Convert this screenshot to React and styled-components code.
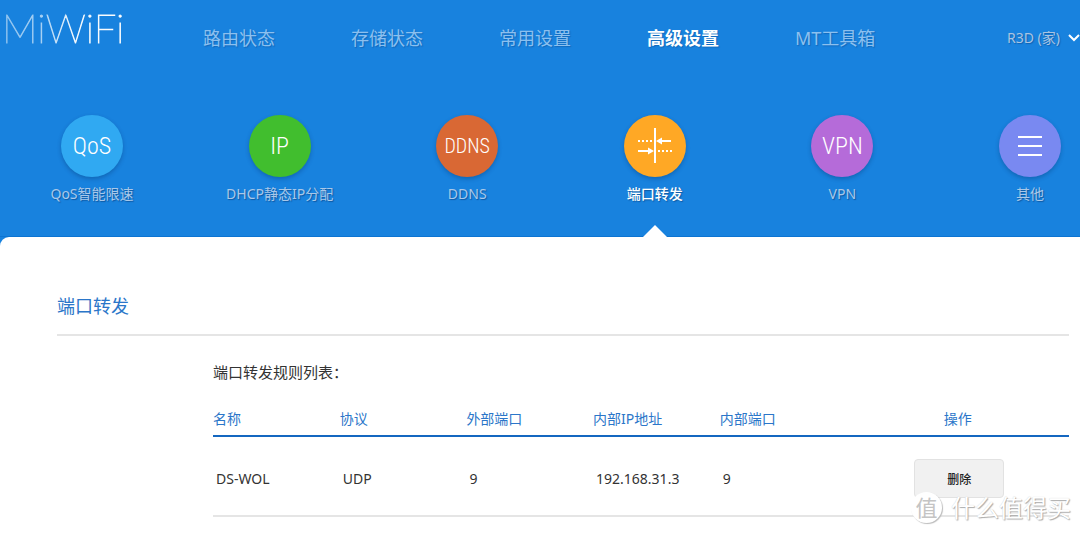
import React from "react";
import styled, { createGlobalStyle } from "styled-components";

const Global = createGlobalStyle`
  *, *::before, *::after { box-sizing: border-box; }
  body {
    margin: 0;
    background: #fff;
    color: #333;
    font: 14px/20px "Noto Sans", "Noto Sans CJK SC", sans-serif;
  }
  a { color: inherit; text-decoration: none; }
`;

const Header = styled.header`
  background: #1882de;
  border-bottom: 1px solid #0c74d2;
`;

const TopBar = styled.div`
  display: flex;
  align-items: flex-start;
  height: 115px;
`;

const Logo = styled.a`
  width: 203px;
  padding: 4px 0 0 2px;

  span {
    font: 100 40px/48px Lato, sans-serif;
    color: transparent;
    background: linear-gradient(90deg, #8cc1ee 0, #a8d1f3 42px, #f2f8fd 72px, #fff 124px) no-repeat;
    -webkit-background-clip: text;
    background-clip: text;
    -webkit-text-stroke: 1px transparent;
  }
`;

const MainNav = styled.nav`
  display: flex;
  gap: 76px;
  padding-top: 24px;
`;

const NavLink = styled.a`
  font-size: 18px;
  line-height: 28px;
  white-space: nowrap;
  font-weight: ${(p) => (p.$active ? 700 : 400)};
  color: ${(p) => (p.$active ? "#fff" : "#8cc0ef")};
  text-shadow: 1px 1px 1px rgba(0, 50, 110, 0.3);
`;

const Device = styled.button`
  display: flex;
  align-items: center;
  gap: 8px;
  margin-left: auto;
  padding: 28px 0 0;
  border: 0;
  background: none;
  color: #a9c4e2;
  font: inherit;
  white-space: nowrap;
  text-shadow: 1px 1px 1px rgba(0, 50, 110, 0.4);
  cursor: pointer;
`;

const Tabs = styled.nav`
  display: flex;
  justify-content: space-between;
  padding: 0 19px 0 61px;
`;

const Tab = styled.a`
  position: relative;
  display: flex;
  flex-direction: column;
  align-items: center;
  gap: 7px;
  width: 62px;
  height: 121px;
  color: ${(p) => (p.$active ? "#fff" : "#a9c8e9")};
  font-weight: ${(p) => (p.$active ? 500 : 400)};
  white-space: nowrap;
  text-shadow: 1px 1px 1px rgba(0, 40, 90, 0.45);

  &::after {
    content: "";
    display: ${(p) => (p.$active ? "block" : "none")};
    position: absolute;
    bottom: -1px;
    left: 19px;
    border: 12px solid transparent;
    border-top: 0;
    border-bottom-color: #fff;
  }
`;

const Disc = styled.span`
  display: flex;
  flex: none;
  align-items: center;
  justify-content: center;
  width: 62px;
  height: 62px;
  border-radius: 50%;
  background: ${(p) => p.$color};
  box-shadow: 0 2px 4px rgba(0, 40, 90, 0.3);
  color: #fff;
  font: 300 ${(p) => (p.$small ? 20 : 24)}px/32px "Roboto Condensed", "Liberation Sans Narrow", Roboto, sans-serif;
  text-shadow: none;
`;

const Panel = styled.main`
  padding: 51px 11px 16px 57px;
  background: #fff;
`;

const PanelEdge = styled.div`
  background: #1882de;

  > * {
    border-top-left-radius: 9px;
  }
`;

const Title = styled.h1`
  margin: 0;
  padding: 4px 0 14px;
  border-bottom: 2px solid #e5e5e5;
  color: #2b76c9;
  font-size: 18px;
  font-weight: 400;
  line-height: 28px;
`;

const Section = styled.section`
  padding: 26px 0 0 156px;
`;

const Rules = styled.table`
  width: 100%;
  table-layout: fixed;
  border-collapse: collapse;

  caption {
    padding-bottom: 27px;
    text-align: left;
    font-size: 15px;
    line-height: 20px;
  }
  th {
    padding: 0 0 6px;
    border-bottom: 2px solid #1467c0;
    color: #2b76c9;
    font-weight: 400;
    text-align: left;
  }
  td {
    height: 80px;
    padding: 5px 0 0 3px;
    border-bottom: 2px solid #e5e5e5;
  }
  th:last-child, td:last-child {
    width: 26%;
    text-align: center;
  }
`;

const DeleteButton = styled.button`
  width: 90px;
  height: 39px;
  border: 1px solid #e2e2e2;
  border-radius: 4px;
  background: #f1f1f1;
  color: #222;
  font: 500 12px/20px "Noto Sans CJK SC", sans-serif;
  cursor: pointer;
`;

const Watermark = styled.div`
  position: absolute;
  top: 490px;
  right: 9px;
  display: flex;
  align-items: center;
  gap: 9px;
  color: #fff;
  font: 400 24px/34px "Noto Sans CJK SC", sans-serif;
  text-shadow: 1px 1px 1px #aaa, 0 0 1px #ccc;
  pointer-events: none;
`;

const Seal = styled.span`
  width: 31px;
  height: 31px;
  border-radius: 50%;
  background: #fff;
  box-shadow: 1px 1px 1px #bbb;
  color: #c4c4c4;
  font-size: 22px;
  line-height: 29px;
  text-align: center;
  text-shadow: none;
`;

const ForwardIcon = () => (
  <svg width="34" height="36" viewBox="0 0 34 36" fill="#fff" aria-hidden="true">
    <path d="M16 0h2v35h-2z" />
    <path d="M0 12h2v2H0zM4 12h2v2H4zM8 12h2v2H8zM12 12h2v2h-2zM20 22h2v2h-2zM24 22h2v2h-2zM28 22h2v2h-2zM32 22h2v2h-2z" />
    <path d="M18 13l6-3.500v2.500h9v2H24v2.500zM16 23l-6 3.500v-2.500H0v-2h10v-2.500z" />
  </svg>
);

const MenuIcon = () => (
  <svg width="24" height="20" viewBox="0 0 24 20" fill="#fff" aria-hidden="true">
    <path d="M0 0h24v2H0zM0 9h24v2H0zM0 18h24v2H0z" />
  </svg>
);

const navItems = ["路由状态", "存储状态", "常用设置", "高级设置", "MT工具箱"];

const tabs = [
  { label: "QoS智能限速", mark: "QoS", color: "#30a9f2" },
  { label: "DHCP静态IP分配", mark: "IP", color: "#41be2e" },
  { label: "DDNS", mark: "DDNS", color: "#d96834", small: true },
  { label: "端口转发", mark: <ForwardIcon />, color: "#ffa825", active: true },
  { label: "VPN", mark: "VPN", color: "#b56bd9" },
  { label: "其他", mark: <MenuIcon />, color: "#7989f1" },
];

const columns = ["名称", "协议", "外部端口", "内部IP地址", "内部端口", "操作"];
const rules = [["DS-WOL", "UDP", "9", "192.168.31.3", "9"]];

export default function App() {
  return (
    <>
      <Global />
      <Header>
        <TopBar>
          <Logo href="#home"><span>MiWiFi</span></Logo>
          <MainNav>
            {navItems.map((name) => (
              <NavLink key={name} href="#nav" $active={name === "高级设置"}>{name}</NavLink>
            ))}
          </MainNav>
          <Device type="button">
            R3D (家)
            <svg width="12" height="8" viewBox="0 0 12 8" fill="none" stroke="#fff" strokeWidth="2" aria-hidden="true">
              <path d="M1 1l5 5 5-5" />
            </svg>
          </Device>
        </TopBar>
        <Tabs>
          {tabs.map((t) => (
            <Tab key={t.label} href="#tab" $active={t.active}>
              <Disc $color={t.color} $small={t.small}>{t.mark}</Disc>
              {t.label}
            </Tab>
          ))}
        </Tabs>
      </Header>
      <PanelEdge>
        <Panel>
          <Title>端口转发</Title>
          <Section>
            <Rules>
              <caption>端口转发规则列表：</caption>
              <thead>
                <tr>{columns.map((c) => <th key={c} scope="col">{c}</th>)}</tr>
              </thead>
              <tbody>
                {rules.map((r) => (
                  <tr key={r[0]}>
                    {r.map((v, i) => <td key={i}>{v}</td>)}
                    <td><DeleteButton type="button">删除</DeleteButton></td>
                  </tr>
                ))}
              </tbody>
            </Rules>
          </Section>
        </Panel>
      </PanelEdge>
      <Watermark><Seal>值</Seal>什么值得买</Watermark>
    </>
  );
}
